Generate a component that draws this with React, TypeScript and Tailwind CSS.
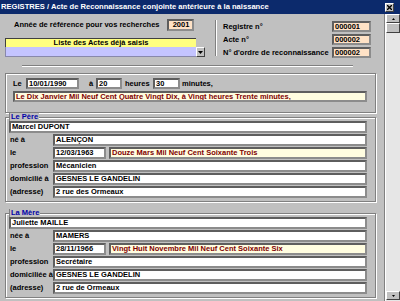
import React from "react";

const FIELD =
  "border-2 border-t-[#5e5e5e] border-l-[#5e5e5e] border-b-[#8c8c8c] border-r-[#8c8c8c] flex items-center pl-[1px] overflow-hidden whitespace-nowrap";

function Row({ label, children }: { label: string; children: React.ReactNode }) {
  return (
    <div className="flex items-start h-[12px]">
      <div className="w-[44px] pl-[1px] pt-[2px] whitespace-nowrap">{label}</div>
      {children}
    </div>
  );
}

function Person({
  title,
  name,
  lieuLabel,
  lieu,
  date,
  dateText,
  profession,
  domLabel,
  dom,
  adresse,
  mt,
}: {
  title: string;
  name: string;
  lieuLabel: string;
  lieu: string;
  date: string;
  dateText: string;
  profession: string;
  domLabel: string;
  dom: string;
  adresse: string;
  mt: string;
}) {
  return (
    <fieldset
      className={
        "ml-[5px] w-[371px] border border-[#808080] shadow-[inset_1px_1px_0_#ffffff,1px_1px_0_#ffffff] pl-[3px] pb-[3px] flex flex-col gap-[1px] " +
        mt
      }
    >
      <legend className="text-[#0000a8] leading-[8px] h-[8px] bg-[#c0c0c0] pl-[1px] pr-[1px] border-l border-[#808080]">
        {title}
      </legend>
      <div className={FIELD + " w-[358px] h-[12px] bg-white"}>{name}</div>
      <Row label={lieuLabel}>
        <div className={FIELD + " w-[314px] h-[12px] bg-white"}>{lieu}</div>
      </Row>
      <Row label="le">
        <div className={FIELD + " w-[53px] h-[12px] bg-white"}>{date}</div>
        <div className={FIELD + " ml-[3px] w-[258px] h-[12px] bg-[#fffde0] text-[#800000]"}>{dateText}</div>
      </Row>
      <Row label="profession">
        <div className={FIELD + " w-[314px] h-[12px] bg-white"}>{profession}</div>
      </Row>
      <Row label={domLabel}>
        <div className={FIELD + " w-[314px] h-[12px] bg-white"}>{dom}</div>
      </Row>
      <Row label="(adresse)">
        <div className={FIELD + " w-[314px] h-[12px] bg-white"}>{adresse}</div>
      </Row>
    </fieldset>
  );
}

export default function App() {
  return (
    <div className="w-[400px] h-[301px] overflow-hidden bg-[#c0c0c0] flex flex-col font-['Liberation_Sans',Arial,sans-serif] font-bold text-[7.5px] leading-none text-black">
      {/* Title bar */}
      <div className="h-[14px] bg-[#0c2a6c] flex items-center pl-[1px] text-white shrink-0">
        <span className="whitespace-nowrap text-[7.6px]">
          REGISTRES / Acte de Reconnaissance conjointe antérieure à la naissance
        </span>
        <div className="ml-auto mr-[6px] w-[9px] h-[9px] bg-[#c0c0c0] border border-t-white border-l-white border-b-[#404040] border-r-[#404040] flex items-center justify-center">
          <svg width="5" height="5" viewBox="0 0 5 5">
            <path d="M0 0L5 5M5 0L0 5" stroke="#000" strokeWidth="1.4" />
          </svg>
        </div>
      </div>

      <div className="flex flex-1 min-h-0">
        {/* Content */}
        <div className="w-[384px] flex flex-col">
          {/* Top area */}
          <div className="flex items-start pt-[5px]">
            <div className="ml-[5px] w-[200px] flex flex-col">
              <div className="flex items-center h-[12px]">
                <div className="w-[162px] pl-[9px] whitespace-nowrap">Année de référence pour vos recherches</div>
                <div className={FIELD + " w-[27px] h-[12px] bg-[#ffe2c6] justify-center pl-0"}>2001</div>
              </div>
              <div className="mt-[7px] w-[191px] h-[9px] bg-[#ffff80] border-t border-l border-[#404040] flex items-center justify-center whitespace-nowrap">
                Liste des Actes déjà saisis
              </div>
              <div className="flex h-[10px]">
                <div className="w-[191px] h-[10px] bg-[#c4c4ff] border-l border-b border-[#8888aa]" />
                <div className="w-[9px] h-[10px] bg-[#c0c0c0] border border-t-white border-l-white border-b-[#404040] border-r-[#404040] flex items-center justify-center">
                  <svg width="5" height="3" viewBox="0 0 5 3">
                    <path d="M0 0H5L2.5 3Z" fill="#000" />
                  </svg>
                </div>
              </div>
            </div>
            <div className="ml-[10px] mt-[1px] w-[2px] h-[36px] border-l border-r border-l-[#808080] border-r-white" />
            <div className="ml-[6px] mt-[2px] flex flex-col gap-[2px]">
              <div className="flex items-center h-[11px]">
                <div className="w-[109px] whitespace-nowrap">Registre n°</div>
                <div className={FIELD + " w-[39px] h-[11px] bg-[#ffe2c6]"}>000001</div>
              </div>
              <div className="flex items-center h-[11px]">
                <div className="w-[109px] whitespace-nowrap">Acte n°</div>
                <div className={FIELD + " w-[39px] h-[11px] bg-[#ffe2c6]"}>000002</div>
              </div>
              <div className="flex items-center h-[11px]">
                <div className="w-[109px] whitespace-nowrap">N° d'ordre de reconnaissance</div>
                <div className={FIELD + " w-[39px] h-[11px] bg-[#ffe2c6]"}>000002</div>
              </div>
            </div>
          </div>

          {/* Separator */}
          <div className="mt-[7px] ml-[22px] w-[331px] h-[2px] border-t border-b border-t-[#808080] border-b-white" />

          {/* Date group */}
          <div className="mt-[6px] ml-[5px] w-[371px] h-[40px] border border-[#808080] shadow-[inset_1px_1px_0_#ffffff,1px_1px_0_#ffffff] pl-[7px] pt-[4px] flex flex-col">
            <div className="flex items-center h-[11px]">
              <div className="w-[13px]">Le</div>
              <div className={FIELD + " w-[53px] h-[11px] bg-white"}>10/01/1990</div>
              <div className="w-[17px] pl-[10px]">à</div>
              <div className={FIELD + " w-[26px] h-[11px] bg-white"}>20</div>
              <div className="w-[31px] pl-[3px]">heures</div>
              <div className={FIELD + " w-[27px] h-[11px] bg-white"}>30</div>
              <div className="pl-[2px]">minutes,</div>
            </div>
            <div className={FIELD + " mt-[2px] w-[354px] h-[11px] bg-[#fffde0] text-[#800000]"}>
              Le Dix Janvier Mil Neuf Cent Quatre Vingt Dix, à Vingt heures Trente minutes,
            </div>
          </div>

          <Person
            mt="mt-0"
            title="Le Père"
            name="Marcel DUPONT"
            lieuLabel="né à"
            lieu="ALENÇON"
            date="12/03/1963"
            dateText="Douze Mars Mil Neuf Cent Soixante Trois"
            profession="Mécanicien"
            domLabel="domicilié à"
            dom="GESNES LE GANDELIN"
            adresse="2 rue des Ormeaux"
          />
          <Person
            mt="mt-[7px]"
            title="La Mère"
            name="Juliette MAILLE"
            lieuLabel="née à"
            lieu="MAMERS"
            date="28/11/1966"
            dateText="Vingt Huit Novembre Mil Neuf Cent Soixante Six"
            profession="Secrétaire"
            domLabel="domiciliée à"
            dom="GESNES LE GANDELIN"
            adresse="2 rue de Ormeaux"
          />
        </div>

        <div className="w-[1px] bg-[#808080]" />
        <div className="w-[1px] bg-white" />

        {/* Scrollbar */}
        <div className="w-[14px] bg-[#e6e6e6] flex flex-col">
          <div className="h-[9px] bg-[#c0c0c0] border border-t-white border-l-white border-b-[#404040] border-r-[#404040] flex items-center justify-center">
            <svg width="3" height="2" viewBox="0 0 3 2">
              <path d="M0 2H3L1.5 0Z" fill="#000" />
            </svg>
          </div>
          <div className="h-[10px] bg-[#c0c0c0] border border-t-white border-l-white border-b-[#404040] border-r-[#404040]" />
          <div className="flex-1" />
          <div className="h-[9px] mb-[1px] bg-[#c0c0c0] border border-t-white border-l-white border-b-[#404040] border-r-[#404040] flex items-center justify-center">
            <svg width="3" height="2" viewBox="0 0 3 2">
              <path d="M0 0H3L1.5 2Z" fill="#000" />
            </svg>
          </div>
        </div>
      </div>
    </div>
  );
}
